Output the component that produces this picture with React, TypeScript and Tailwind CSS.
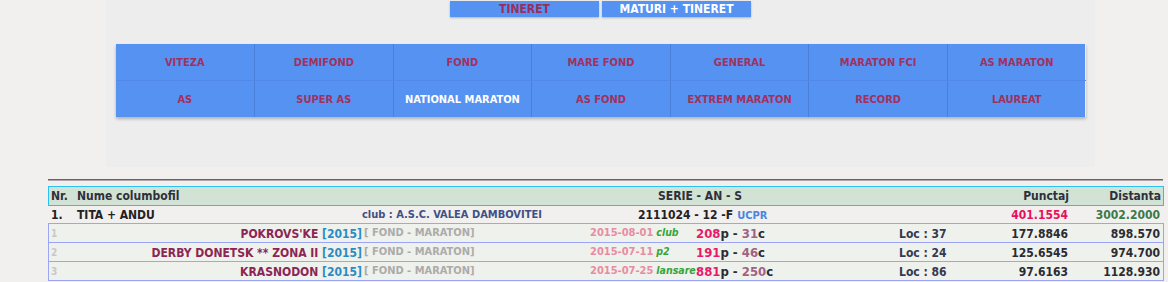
const menuRows = [
  ["VITEZA", "DEMIFOND", "FOND", "MARE FOND", "GENERAL", "MARATON FCI", "AS MARATON"],
  ["AS", "SUPER AS", "NATIONAL MARATON", "AS FOND", "EXTREM MARATON", "RECORD", "LAUREAT"],
];

const results = [
  { nr: 1, name: "POKROVS'KE", date: "2015-08-01", type: "club", p: 208, c: 31, loc: 37, punctaj: "177.8846", dist: "898.570" },
  { nr: 2, name: "DERBY DONETSK ** ZONA II", date: "2015-07-11", type: "p2", p: 191, c: 46, loc: 24, punctaj: "125.6545", dist: "974.700" },
  { nr: 3, name: "KRASNODON", date: "2015-07-25", type: "lansare", p: 881, c: 250, loc: 86, punctaj: "97.6163", dist: "1128.930" },
];

const App = () => {
  return (
    <div className="w-full h-[282px] bg-[#f2efef] overflow-hidden font-['DejaVu_Sans_Condensed','Liberation_Sans',sans-serif] font-bold">
      {/* Top panel */}
      <div className="ml-[106px] w-[989px] h-[167px] bg-[#ededed] flex flex-col items-center pt-[1px]">
        <div className="flex gap-[3px]">
          <div className="w-[149px] h-[16px] bg-[#5592f2] text-[#9b2d5a] text-[12px] leading-[16px] text-center shadow-[0_1px_2px_rgba(0,0,0,0.25)]">
            TINERET
          </div>
          <div className="w-[149px] h-[16px] bg-[#5592f2] text-white text-[12px] leading-[16px] text-center shadow-[0_1px_2px_rgba(0,0,0,0.25)]">
            MATURI + TINERET
          </div>
        </div>

        <div className="mt-[27px] w-[970px] shadow-[0_2px_3px_rgba(0,0,0,0.25)]">
          {menuRows.map((row, r) => (
            <div key={r} className={`grid grid-cols-7 ${r === 0 ? "border-b border-[#5289e6]" : ""}`}>
              {row.map((item, i) => (
                <div
                  key={item}
                  className={`h-[36px] pt-[2px] bg-[#5592f2] flex items-center justify-center text-[11px] ${
                    i > 0 ? "border-l border-[#4a80d9]" : ""
                  } ${item === "NATIONAL MARATON" ? "text-white" : "text-[#a3305c]"}`}
                >
                  {item}
                </div>
              ))}
            </div>
          ))}
        </div>
      </div>

      {/* Separator */}
      <div className="mt-[12px] ml-[48px] w-[1115px] border-t border-[#9b4766] border-b border-b-[#b0a8aa]" />

      {/* Table */}
      <div className="mt-[5px] ml-[48px] w-[1116px]">
        {/* Header */}
        <div className="h-[20px] flex items-center bg-[#d2e2d5] border border-[#2cc0ef] text-[12px] text-[#2f2f3a]">
          <div className="w-[28px] pl-[2px]">Nr.</div>
          <div className="w-[581px]">Nume columbofil</div>
          <div className="w-[242px]">SERIE - AN - S</div>
          <div className="w-[169px] text-right">Punctaj</div>
          <div className="w-[92px] text-right">Distanta</div>
        </div>

        {/* Main row */}
        <div className="h-[17px] pt-[1px] flex items-center text-[12px] text-[#222] whitespace-nowrap">
          <div className="w-[29px] pl-[3px]">1.</div>
          <div className="w-[285px]">TITA + ANDU</div>
          <div className="w-[276px] text-[11px] text-[#3e5185]">club : A.S.C. VALEA DAMBOVITEI</div>
          <div className="w-[261px] flex items-baseline">
            2111024 - 12 -F
            <span className="ml-[4px] text-[11px] text-[#4a86e0]">UCPR</span>
          </div>
          <div className="w-[169px] text-right text-[#e8105e]">401.1554</div>
          <div className="w-[92px] text-right text-[#3a7a45]">3002.2000</div>
        </div>

        {/* Sub rows */}
        <div className="border-t border-[#9aa6f5]">
          {results.map((r) => (
            <div
              key={r.nr}
              className="h-[19px] pt-[1px] flex items-center bg-[#eff1ec] border-x border-b border-[#9aa6f5] text-[12px] whitespace-nowrap"
            >
              <div className="w-[21px] pl-[2px] text-[10px] text-[#c8c8c8]">{r.nr}</div>
              <div className="w-[292px] text-right text-[#8b2555]">
                {r.name} <span className="text-[#2b8cc4]">[2015]</span>
              </div>
              <div className="w-[228px] pl-[2px] text-[11px] text-[#ababab]">[ FOND - MARATON]</div>
              <div className="w-[106px] shrink-0 text-[11px] text-[#e88ca2] flex items-baseline">
                {r.date}
                <span className="ml-[3px] italic text-[10.5px] text-[#36a53a]">{r.type}</span>
              </div>
              <div className="w-[203px] text-[13px] text-[#2b2b33]">
                <span className="text-[#e61c6b]">{r.p}</span>p - <span className="text-[#a06283]">{r.c}</span>c
              </div>
              <div className="w-[60px] text-[#333a52]">Loc : {r.loc}</div>
              <div className="w-[109px] text-right text-[#2b2b33]">{r.punctaj}</div>
              <div className="w-[92px] text-right text-[#2b2b33]">{r.dist}</div>
            </div>
          ))}
        </div>
      </div>
    </div>
  );
};

export default App;
